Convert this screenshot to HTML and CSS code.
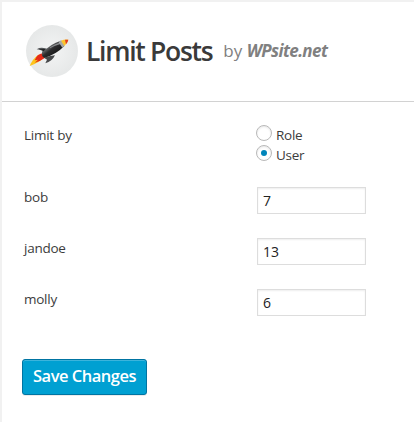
FILE: index.html
```html
<!DOCTYPE html>
<html lang="en">
<head>
<meta charset="utf-8">
<title>Limit Posts</title>
<link rel="stylesheet" href="styles.css">
</head>
<body>
<main class="panel">
  <header class="header">
    <svg class="logo" viewBox="6 9 156 156" aria-hidden="true">
      <defs>
        <radialGradient id="disc"><stop offset="0" stop-color="#f3f4f4"/><stop offset="1" stop-color="#e6e8e8"/></radialGradient>
        <linearGradient id="hull" x1="0.2" y1="0.2" x2="0.8" y2="0.8"><stop offset="0.15" stop-color="#77797b"/><stop offset="0.45" stop-color="#2b2b2c"/><stop offset="1" stop-color="#111"/></linearGradient>
      </defs>
      <circle cx="84" cy="87" r="78" fill="url(#disc)"/>
      <path d="M17 132Q25 111 43 98L60 105Q48 121 17 132Z" fill="#fdc51b"/>
      <path d="M32 115Q39 96 56 94L61 109Q46 120 32 122L42 113Z" fill="#e52b19"/>
      <path d="M38 82Q49 75 64 79L75 83L61 96L54 92L56 84Z" fill="#54575a"/>
      <path d="M43 82L64 81L60 88Z" fill="#242526"/>
      <path d="M79 102L93 100Q85 118 64 124L69 113L60 107Z" fill="#47494b"/>
      <path d="M54 93Q79 65 111 56L121 72Q98 96 61 108Q52 103 54 93Z" fill="url(#hull)"/>
      <path d="M78 76Q94 65 110 61L112 65Q92 70 78 79Z" fill="#8b8d8f"/>
      <path d="M103 59L112 55L122 71L115 77Z" fill="#a6a8a9"/>
      <path d="M111 56Q121 52 133 53Q130 64 121 72Z" fill="#fbc52d"/>
      <path d="M123 53L133 53Q131 62 126 67Z" fill="#e33a22"/>
    </svg>
    <h1 class="title">Limit Posts</h1>
    <span class="byline">by <a class="author">WPsite.net</a></span>
  </header>
  <form class="form">
    <div class="row row-options">
      <span class="label">Limit by</span>
      <div class="options">
        <label class="option"><input class="radio" type="radio" name="by"><span>Role</span></label>
        <label class="option"><input class="radio" type="radio" name="by" checked><span>User</span></label>
      </div>
    </div>
    <div class="row"><label class="label" for="bob">bob</label><input class="field" id="bob" type="text" value="7"></div>
    <div class="row"><label class="label" for="jandoe">jandoe</label><input class="field" id="jandoe" type="text" value="13"></div>
    <div class="row"><label class="label" for="molly">molly</label><input class="field" id="molly" type="text" value="6"></div>
    <button class="save" type="button">Save Changes</button>
  </form>
</main>
</body>
</html>
```
FILE: styles.css
```css
* { box-sizing: border-box; }
body {
  margin: 0;
  background: #f1f1f1;
  color: #3c3c3c;
  font: 13.5px/20px "Open Sans", sans-serif;
  letter-spacing: -0.25px;
}
.panel {
  height: 422px;
  border: solid #f1f1f1;
  border-width: 2px 0 0 2px;
  background: #fff;
}
.header {
  display: flex;
  align-items: center;
  height: 100px;
  padding: 0 0 2px 24px;
  border-bottom: 1px solid #d2d2d2;
}
.logo { width: 52px; height: 52px; }
.title {
  margin: 0 0 0 8px;
  color: #3a3a3a;
  font-size: 26.5px;
  font-weight: 650;
  line-height: 36px;
  letter-spacing: -1.3px;
}
.byline {
  margin: 1px 0 0 11px;
  color: #808080;
  font-size: 17px;
  letter-spacing: 0;
}
.author {
  font-style: italic;
  font-weight: 700;
  letter-spacing: -0.6px;
}
.form { padding: 21px 0 0 22px; }
.row {
  display: grid;
  grid-template-columns: 233px 109px;
  align-items: start;
  height: 51px;
}
.row-options { height: 64px; }
.row-options .label { padding-top: 2px; }
.option {
  display: flex;
  align-items: center;
  height: 20px;
  margin-left: -1px;
}
.option span { padding: 4px 0 0 4px; }
.radio {
  display: grid;
  place-items: center;
  appearance: none;
  width: 16px;
  height: 16px;
  margin: 0;
  border: 1px solid #b9b9b9;
  border-radius: 50%;
  background: #fff;
  box-shadow: inset 0 1px 2px rgba(0, 0, 0, .1);
}
.radio:checked::before {
  content: "";
  width: 6px;
  height: 6px;
  border-radius: 50%;
  background: #0085ba;
}
.field {
  width: 109px;
  height: 27px;
  margin: 0;
  padding: 3px 5px;
  border: 1px solid #ddd;
  background: #fff;
  box-shadow: inset 0 1px 2px rgba(0, 0, 0, .07);
  color: #222;
  font: 14px/19px "Open Sans", sans-serif;
}
.save {
  display: block;
  width: 125px;
  height: 36px;
  margin: 19px 0 0 -2px;
  padding: 0 0 2px;
  border: 1px solid #0074a2;
  border-radius: 3px;
  background: #00a0d2;
  box-shadow: inset 0 1px 0 rgba(120, 200, 230, .5), 0 1px 0 rgba(0, 0, 0, .08);
  color: #fff;
  font: 600 16.5px/32px "Open Sans", sans-serif;
  letter-spacing: -0.5px;
}
```
